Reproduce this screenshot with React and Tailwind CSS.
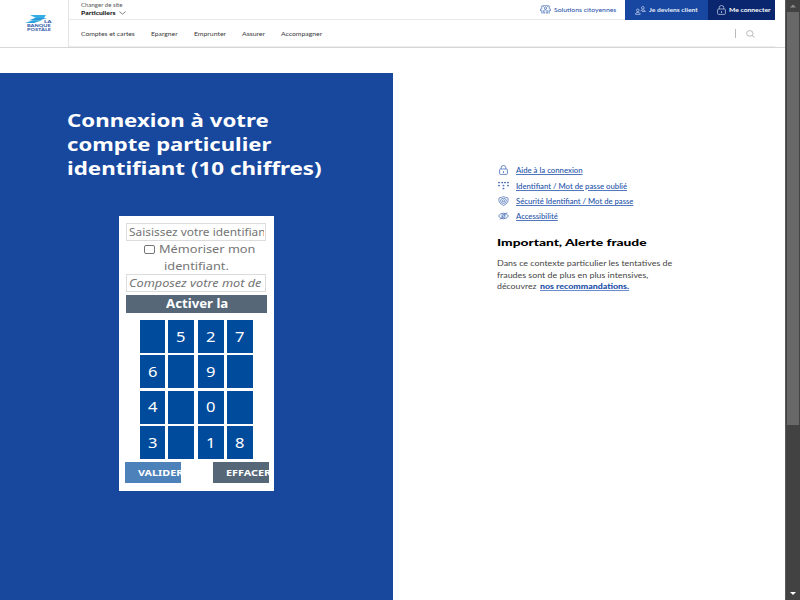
import React, { useLayoutEffect, useRef } from "react";

// Single line of text stretched horizontally to an exact width.
function Txt({ w, className = "", children }) {
  const ref = useRef(null);
  useLayoutEffect(() => {
    const el = ref.current;
    el.style.transform = `scaleX(${w / el.offsetWidth})`;
  }, [w]);
  return (
    <span className={`block shrink-0 whitespace-nowrap ${className}`} style={{ width: w }}>
      <span ref={ref} className="inline-block origin-left align-top">{children}</span>
    </span>
  );
}

function Logo() {
  return (
    <div className="flex w-[28px] flex-col font-black text-[#3a62ad]">
      <div className="flex h-[10px] items-end">
        <svg width="26" height="10" viewBox="0 0 26 10" className="-mr-[7px] shrink-0">
          <path d="M5 1H21L19 4H11Z" fill="#35aee8" />
          <path d="M10 4H22L15 6.3H4Z" fill="#299bd9" />
          <path d="M0 9L8 6.3H17L9 9Z" fill="#29a3df" />
        </svg>
        <Txt w={7} className="text-[4.4px] leading-[4px]">LA</Txt>
      </div>
      <Txt w={24} className="ml-[2px] text-[4.4px] leading-[4px]">BANQUE</Txt>
      <Txt w={24} className="ml-[2px] text-[4.4px] leading-[4px]">POSTALE</Txt>
    </div>
  );
}

function Lock({ className }) {
  return (
    <svg width="9" height="10" viewBox="0 0 9 10" fill="none" stroke="currentColor" strokeWidth=".8" className={className}>
      <path d="M2.2 4V2.6a2.3 2.1 0 0 1 4.6 0V4M1.4 4h6.2q.8 0 .8.8V8.6q0 .8-.8.8H1.4q-.8 0-.8-.8V4.8q0-.8.8-.8ZM4.5 6v2" />
    </svg>
  );
}

function Citizens() {
  return (
    <svg width="11" height="9" viewBox="0 0 11 9" fill="none" stroke="#3d66b3" strokeWidth=".7">
      <path d="M1.7 2.6a1 1 0 1 1 1.6-1a1.1 1.1 0 0 1 2.2-.4a1.1 1.1 0 0 1 2.2.4a1 1 0 1 1 1.6 1" />
      <circle cx="5.5" cy="3.1" r="1.1" />
      <path d="M.5 6V4.3Q.9 2.9 2.5 2.9M1.8 4.6v3.9M3.3 8.5V6Q4 4.8 5.5 4.8T7.7 6v2.5M10.5 6V4.3Q10.1 2.9 8.5 2.9M9.2 4.6v3.9M4.6 6.5v2M6.4 6.5v2" />
    </svg>
  );
}

function People() {
  return (
    <svg width="11" height="9" viewBox="0 0 11 9" fill="none" stroke="#c4d2ee" strokeWidth=".75">
      <circle cx="7.8" cy="1.8" r="1.3" />
      <circle cx="2.8" cy="4.3" r="1.3" />
      <path d="M.5 8.3V7.8Q1 6.4 2.8 6.4T5.2 7.8v.5ZM5.7 5.2Q6 3.9 7.8 3.9T10.3 5v.4H6.8" />
    </svg>
  );
}

function Dots() {
  const dots = [[1, 1.5], [4.2, 1.5], [7, 1.5], [10, 1.5], [1, 4.5], [5.5, 4.5], [10, 4.5], [5.5, 7.5]];
  return (
    <svg width="11" height="9" viewBox="0 0 11 9" fill="#4068b4">
      {dots.map(([x, y]) => <ellipse key={`${x}-${y}`} cx={x} cy={y} rx=".95" ry=".85" />)}
    </svg>
  );
}

function Shield() {
  return (
    <svg width="11" height="10" viewBox="0 0 11 10" fill="none" stroke="#4a70b7" strokeWidth=".75">
      <path d="M5.5.6Q7.5 1.5 9.9 1.9Q11.3 7 5.5 9.4Q-.3 7 1.1 1.9Q3.5 1.5 5.5.6Z" />
      <ellipse cx="5.5" cy="4.8" rx="2.9" ry="2.5" />
      <ellipse cx="5.5" cy="4.8" rx="1.2" ry="1" />
    </svg>
  );
}

function EyeOff() {
  return (
    <svg width="11" height="8" viewBox="0 0 11 8" fill="none" stroke="#4068b4" strokeWidth=".8">
      <path d="M.5 4Q2.6 1.2 5.5 1.2T10.5 4Q8.4 6.8 5.5 6.8T.5 4ZM2 7.5L9 .5" />
      <circle cx="5.5" cy="4" r="1.6" />
    </svg>
  );
}

const nav = [["Comptes et cartes", 54], ["Epargner", 27], ["Emprunter", 32], ["Assurer", 23], ["Accompagner", 41]];
const keys = ["", "5", "2", "7", "6", "", "9", "", "4", "", "0", "", "3", "", "1", "8"];
const links = [
  [<Lock className="text-[#4a70b7]" />, "Aide à la connexion", 66],
  [<Dots />, "Identifiant / Mot de passe oublié", 111.5],
  [<Shield />, "Sécurité Identifiant / Mot de passe", 118],
  [<EyeOff />, "Accessibilité", 42],
];

function Header() {
  return (
    <header className="flex h-12 border-b border-[#d7d7d7] font-[Lato,sans-serif]">
      <div className="flex w-[69px] shrink-0 border-r border-[#e3e3e3] pt-[14px] pl-[25px]">
        <Logo />
      </div>
      <div className="flex w-[706px] flex-col">
        <div className="flex h-5 border-b border-[#e8e8e8]">
          <div className="flex-1 pt-[2px] pl-[11.5px]">
            <Txt w={42} className="text-[5.5px] leading-[7px] text-[#555]">Changer de site</Txt>
            <div className="flex h-2 items-center">
              <Txt w={34} className="text-[6px] leading-[8px] font-black text-[#222]">Particuliers</Txt>
              <svg width="7" height="4" viewBox="0 0 7 4" fill="none" stroke="#666" strokeWidth=".8" className="ml-1">
                <path d="M.4.6L3.5 3.2L6.6.6" />
              </svg>
            </div>
          </div>
          <div className="flex w-[85px] items-center gap-[3px]">
            <Citizens />
            <Txt w={62} className="text-[6.2px] leading-[18px] font-medium text-[#2f59ac]">Solutions citoyennes</Txt>
          </div>
          <div className="flex h-5 w-[83px] items-center gap-[3px] bg-[#1747a0] pl-[10px]">
            <People />
            <Txt w={49} className="text-[6px] leading-[18px] font-bold text-[#e7eefa]">Je deviens client</Txt>
          </div>
          <div className="flex h-5 w-[67px] items-center gap-[3px] bg-[#09266e] pl-[8.5px]">
            <Lock className="text-[#b8c2dc]" />
            <Txt w={41.5} className="text-[6px] leading-[18px] font-bold text-white">Me connecter</Txt>
          </div>
        </div>
        <div className="flex h-[27px] items-center border-b border-[#ececec] pt-px pl-[11.5px]">
          <nav className="flex flex-1 gap-[16.2px]">
            {nav.map(([label, w]) => <Txt key={label} w={w} className="text-[6px] leading-[10px] text-[#383838]">{label}</Txt>)}
          </nav>
          <span className="h-[9px] w-px bg-[#bbb]" />
          <svg width="9" height="8" viewBox="0 0 9 8" fill="none" stroke="#aaa" strokeWidth=".8" className="mr-5 ml-[10px]">
            <ellipse cx="3.8" cy="3.4" rx="3.2" ry="2.8" />
            <path d="M6 5.5L8.6 7.4" />
          </svg>
        </div>
      </div>
    </header>
  );
}

function LoginCard() {
  return (
    <div className="ml-[119px] h-[275px] w-[155px] bg-white pt-[7px] text-[#757575]">
      <div className="mx-[7px] h-[18px] w-[140px] overflow-hidden border border-[#dcdcdc] pl-[2px]">
        <div className="w-[134.5px] overflow-hidden">
          <Txt w={140.5} className="text-[11px] leading-4">Saisissez votre identifiant</Txt>
        </div>
      </div>
      <div className="flex h-[16px] items-center pl-[25px]">
        <span className="h-[9px] w-[11px] rounded-[2px] border border-[#757575]" />
        <Txt w={97} className="ml-[4px] text-[11.2px] leading-[16px]">Mémoriser mon</Txt>
      </div>
      <Txt w={65} className="ml-[45px] text-[11.2px] leading-[17px]">identifiant.</Txt>
      <div className="mx-[7px] h-[18px] w-[140px] border border-[#dcdcdc] pl-[2px]">
        <Txt w={132} className="text-[11px] leading-4 italic">Composez votre mot de</Txt>
      </div>
      <div className="mt-[3px] ml-[7px] flex h-[18px] w-[141px] justify-center bg-[#566778]">
        <Txt w={62} className="text-[11.5px] leading-[18px] font-bold text-white">Activer la</Txt>
      </div>
      <div className="mt-[7px] ml-[21px] grid w-[113px] grid-cols-[25px_26px_26px_26px] gap-x-[3.3px] gap-y-[2.4px]">
        {keys.map((k, i) => (
          <div key={i} className="flex h-[33px] items-center justify-center bg-[#004b9b]">
            {k && <Txt w={9.8} className="text-[13.5px] leading-[34px] text-white">{k}</Txt>}
          </div>
        ))}
      </div>
      <div className="mt-[3px] flex pl-[6px]">
        <div className="h-[21px] w-[56px] overflow-hidden bg-[#4c81ba] pl-[13px]">
          <Txt w={45.5} className="text-[9.5px] leading-[22px] font-bold text-white">VALIDER</Txt>
        </div>
        <div className="ml-[32px] h-[21px] w-[56px] overflow-hidden bg-[#566778] pl-[13px]">
          <Txt w={45.5} className="text-[9.5px] leading-[22px] font-bold text-white">EFFACER</Txt>
        </div>
      </div>
    </div>
  );
}

function Aside() {
  return (
    <aside className="ml-[104px] pt-[89.8px] font-[Lato,sans-serif]">
      <ul>
        {links.map(([icon, label, w]) => (
          <li key={label} className="flex h-[15.2px] items-center">
            <span className="flex w-[19px] pl-[1px]"><span className="flex w-[11px] justify-center">{icon}</span></span>
            <Txt w={w} className="text-[6.6px] leading-[12px] font-medium text-[#2453aa]">
              <span className="underline decoration-[#5277bd] decoration-1 underline-offset-1">{label}</span>
            </Txt>
          </li>
        ))}
      </ul>
      <h2 className="mt-[10.4px]"><Txt w={150} className="text-[10.2px] leading-4 font-black text-black">Important, Alerte fraude</Txt></h2>
      <div className="mt-[8px] text-[7px] leading-[11.7px] text-[#444]">
        <Txt w={175.5}>Dans ce contexte particulier les tentatives de</Txt>
        <Txt w={152}>fraudes sont de plus en plus intensives,</Txt>
        <div className="flex gap-[2.5px]">
          <Txt w={40}>découvrez</Txt>
          <Txt w={89.5} className="font-black text-[#2350a8]">
            <span className="underline decoration-[#6c8ccd] decoration-1 underline-offset-1">nos recommandations.</span>
          </Txt>
        </div>
      </div>
    </aside>
  );
}

export default function App() {
  return (
    <div className="flex h-[600px] w-[800px] overflow-hidden bg-white font-['Noto_Sans',sans-serif]">
      <div className="flex w-[785px] flex-col">
        <Header />
        <main className="mt-[25px] flex flex-1">
          <section className="w-[393px] bg-[#18479e] pt-[35px]">
            <h1 className="ml-[67px] h-[108px] text-[18.3px] leading-[24.2px] font-bold text-white">
              <Txt w={202}>Connexion à votre</Txt>
              <Txt w={204}>compte particulier</Txt>
              <Txt w={254.5}>identifiant (10 chiffres)</Txt>
            </h1>
            <LoginCard />
          </section>
          <Aside />
        </main>
      </div>
      <div className="flex w-[15px] flex-col items-center justify-between border-l border-[#5a5a5a] bg-[#424242]">
        <div className="flex w-full flex-col items-center">
          <svg width="6" height="12" viewBox="0 0 6 12"><path d="M0 7.5L3 4.5L6 7.5Z" fill="#8d8d8d" /></svg>
          <div className="h-[413px] w-[12px] bg-[#686868]" />
        </div>
        <svg width="6" height="10" viewBox="0 0 6 10"><path d="M0 2L3 5L6 2Z" fill="#fff" /></svg>
      </div>
    </div>
  );
}
